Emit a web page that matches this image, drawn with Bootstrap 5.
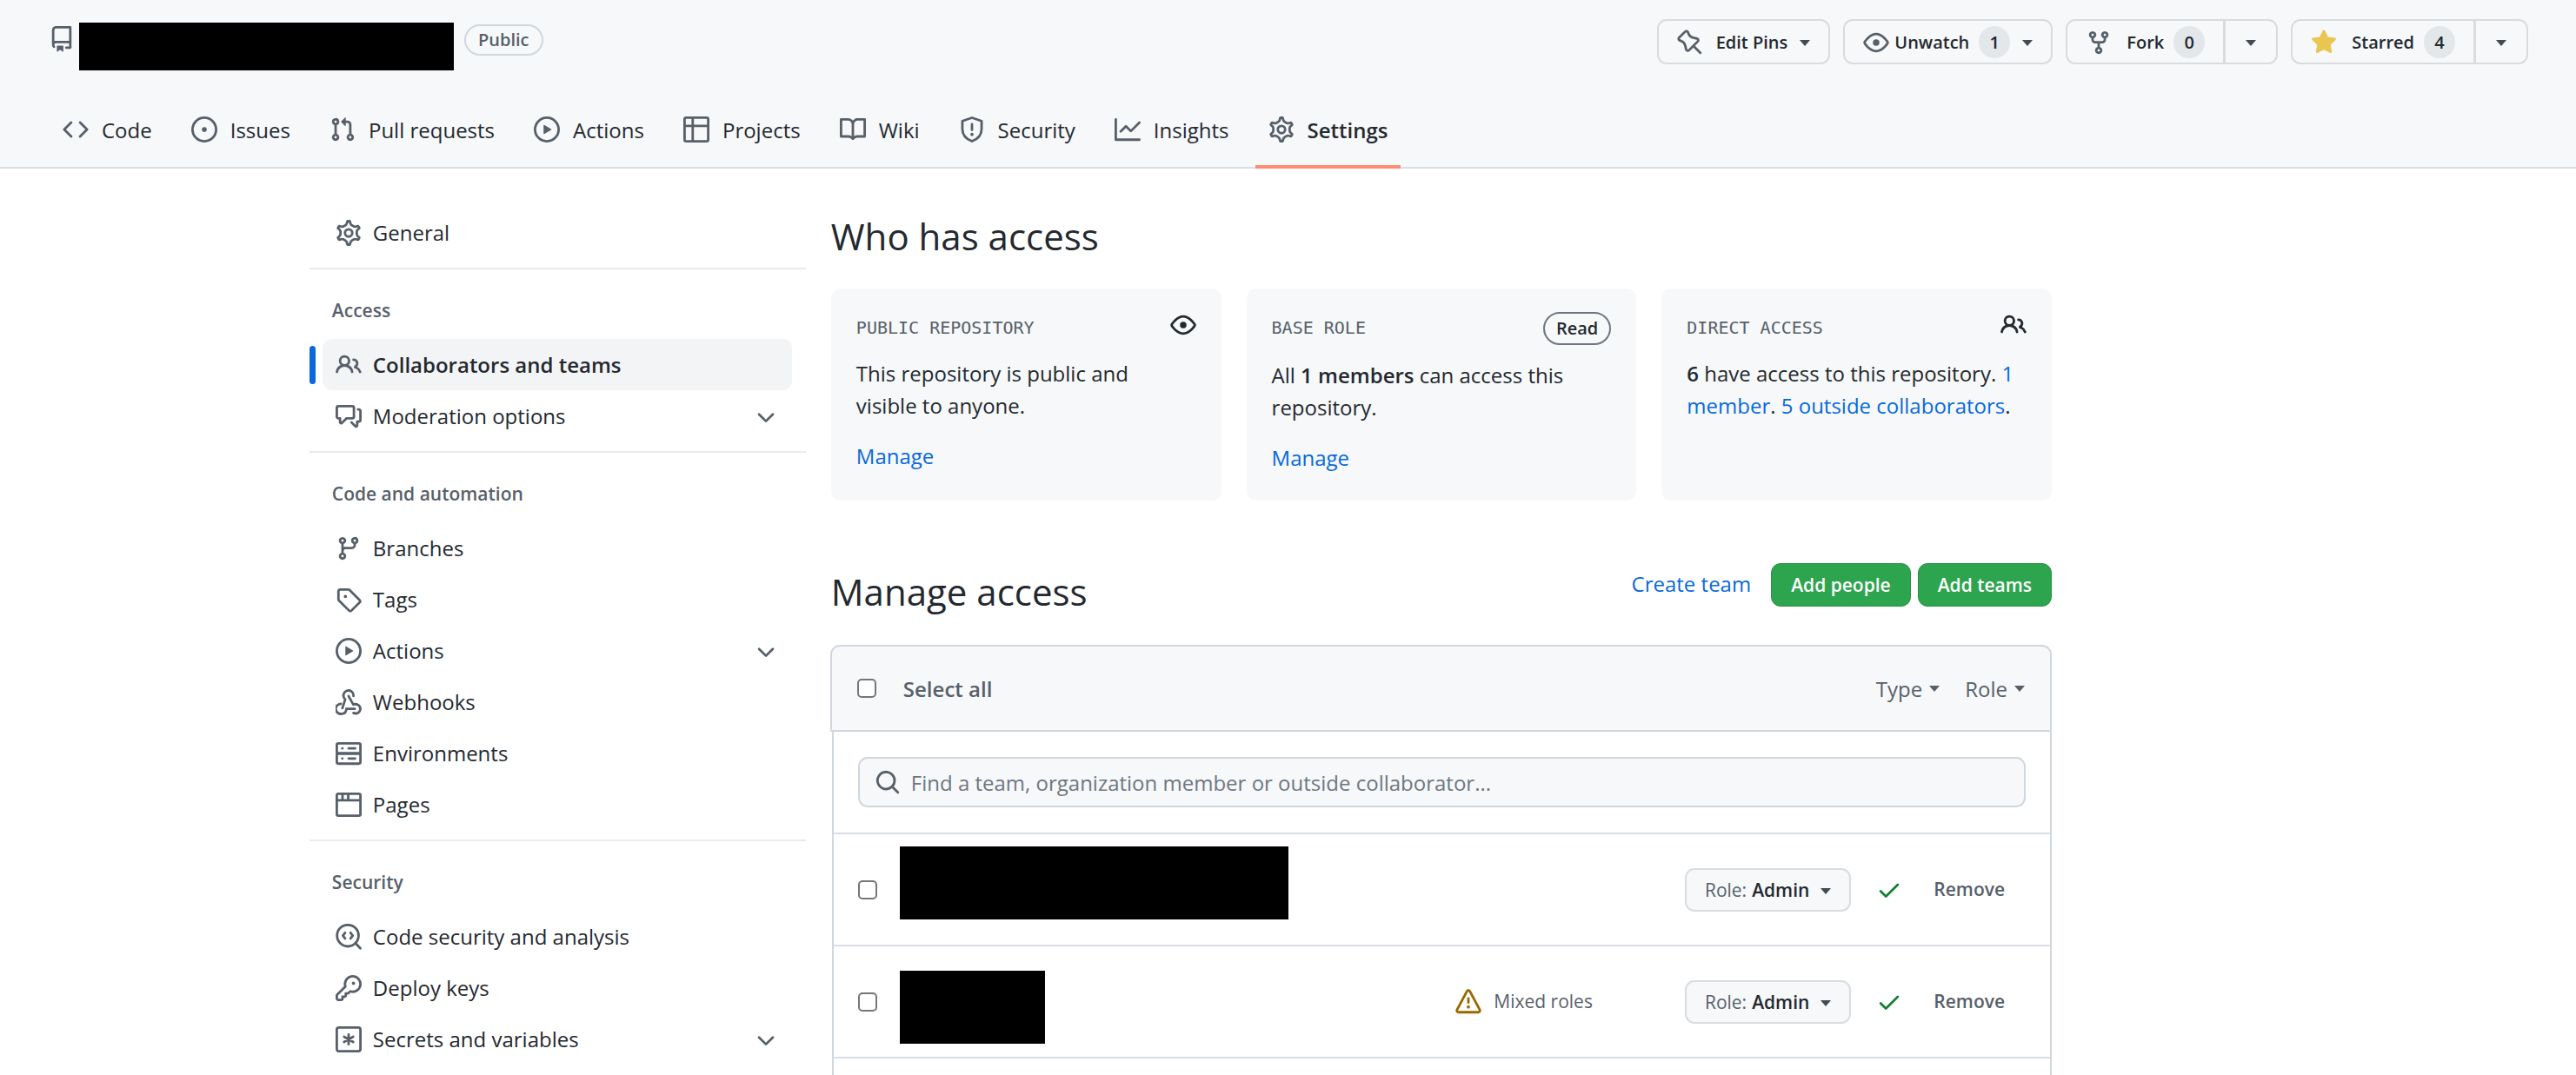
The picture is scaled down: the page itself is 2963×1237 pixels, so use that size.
<!DOCTYPE html>
<html lang="en">
<head>
<meta charset="utf-8">
<meta name="viewport" content="width=device-width, initial-scale=1">
<title>Collaborators and teams</title>
<link href="https://cdn.jsdelivr.net/npm/bootstrap@5.3.0/dist/css/bootstrap.min.css" rel="stylesheet">
<style>
:root{--fg:#24292f;--muted:#57606a;--line:#d0d7de;--soft:#d8dee4;--canvas:#f6f8fa;--blue:#0969da;}
body{font-family:"Open Sans","Noto Sans",sans-serif;font-size:24px;line-height:37px;color:var(--fg);}
a{color:var(--blue);text-decoration:none;}
strong{font-weight:600;}
.oct{width:30px;height:30px;fill:currentColor;fill-rule:evenodd;flex:none;display:block;}
.st{fill:none;stroke:currentColor;stroke-width:1.5;stroke-linecap:round;stroke-linejoin:round;}
.caretdown{width:0;height:0;border:6px solid transparent;border-top:7px solid currentColor;border-bottom:0;flex:none;}
.redact{background:#000;}

.repohead{background:var(--canvas);border-bottom:2px solid var(--soft);height:194px;}
.topline{padding:22px 55px 0 56px;}
.topline .oct{color:var(--muted);}
.topline .starred{color:#eac54f;}
.repobox{width:431px;height:55px;margin:4px 12px 0 5px;}
.pill{border:2px solid var(--line);border-radius:20px;font-size:20px;font-weight:600;line-height:32px;color:var(--muted);padding:0 14px;margin-top:6px;}
.ghbtn{font-size:20px;font-weight:600;line-height:30px;color:var(--fg);background:var(--canvas);border:2px solid #d9dcdf;border-radius:11px;display:flex;align-items:center;padding:1px 21px 0;height:52px;}
.ghbtn:hover{background:#f3f4f6;color:var(--fg);border-color:#d9dcdf;}
.ghbtn .caretdown{color:#424a53;margin-top:2px;}
.countpill{background:#e4e7ea;border-radius:19px;min-width:36px;height:37px;line-height:37px;text-align:center;}
.actionbar{gap:15px;}
.actionbar .t1{padding:0 14px 0 15px;}
.actionbar .t2{padding:0 11px 0 6px;}
.actionbar .t2 ~ .caretdown{margin-left:14px;}
.actionbar .t3{padding:0 11px 0 17px;}
.splitcaret{padding:1px 23px 0;}
.tabs{padding:0 57px;gap:15px;margin-bottom:-2px;}
.tabs a{display:flex;align-items:center;gap:15px;height:90px;padding:0 15px;color:var(--fg);}
.tabs .oct{color:var(--muted);}
.tabs a.active{font-weight:600;border-bottom:4px solid #fd8c73;padding-top:4px;}

.page{padding-left:12.01%;padding-right:20.35%;}
.side{flex:0 0 571px;margin-right:29px;padding-top:44px;}
.side ul{padding-bottom:11px;border-bottom:2px solid #e8ebee;}
.side ul.last{border-bottom:0;}
.side li{margin:0 16px 0 15px;position:relative;}
.side li a{display:flex;align-items:center;height:59px;padding:0 15px;border-radius:11px;color:var(--fg);}
.side li a .lbl{padding-left:13px;flex:1;}
.side .oct{color:var(--muted);}
.side h3{font-size:21px;font-weight:600;line-height:32px;color:var(--muted);margin:0;padding:31px 0 17px 26px;}
.side li.on a{background:#f3f4f6;font-weight:600;}
.side li.on::before{content:"";position:absolute;left:-15px;top:8px;width:7px;height:44px;border-radius:4px;background:var(--blue);}

.mainpane{padding-top:48px;}
h2{font-size:42px;font-weight:400;line-height:60px;margin:0;}
.tiles{gap:29px;margin-top:30px;}
.tile{flex:1 1 0;background:var(--canvas);border-radius:11px;padding:27px 29px;min-height:244px;}
.tile .kicker{font-family:"DejaVu Sans Mono",monospace;font-size:20px;line-height:36px;color:var(--muted);}
.tile p{margin:16px 0 21px;padding-right:8px;}
.rolepill{border:2px solid #6e7781;border-radius:20px;font-size:20px;font-weight:600;line-height:34px;padding:0 13px;}
.managebar{margin-top:72px;height:50px;}
.create{margin-right:15px;padding-bottom:3px;}
.gobtn{background:#2da44e;color:#fff;border:1px solid #2a9147;border-radius:11px;font-size:21px;font-weight:600;line-height:48px;padding:0 22px;}
.gobtn:hover{background:#2c974b;color:#fff;}
.accessbox{margin-top:44px;}
.accessbody{border-left:2px solid var(--line);border-right:2px solid var(--line);margin-left:1px;}
.selhead{background:var(--canvas);border:2px solid var(--line);border-radius:11px 11px 0 0;height:100px;margin-left:-1px;padding:0 29px;color:var(--muted);}
.selhead button{background:none;border:0;padding:0;color:var(--muted);display:flex;align-items:center;gap:8px;}
.selall{font-weight:600;padding-left:31px;}
.filters{gap:29px;}
.form-check-input.tick{width:22px;height:22px;margin:0;border:2px solid #767676;border-radius:5px;flex:none;}
.findrow{padding:29px 28px;border-bottom:2px solid var(--soft);}
.findbox{background:var(--canvas);border:2px solid var(--line);border-radius:11px;height:58px;padding:0 17px;color:var(--muted);}
.findbox input{background:none;border:0;padding:0 0 0 12px;font-size:24px;color:var(--fg);outline:0;flex:1;}
.findbox input::placeholder{color:#6e7781;opacity:1;}
.person{height:129px;border-bottom:2px solid var(--soft);padding:0 52px 0 28px;}
.person .redact{height:84px;margin-left:26px;}
.who1{width:447px;margin-bottom:16px;}
.who2{width:167px;margin-top:12px;}
.mixed{font-size:21px;color:var(--muted);gap:14px;margin-right:106px;}
.rolebtn{font-size:21px;height:50px;gap:13px;margin-right:29px;}
.rl{color:var(--muted);margin-right:-7px;}
.rmbtn{background:none;border:0;padding:0;font-size:21px;font-weight:600;color:var(--muted);}
.amber{color:#9a6700;}
.okgreen{color:#1a7f37;margin-right:36px;}
</style>
</head>
<body>
<svg class="d-none" xmlns="http://www.w3.org/2000/svg">
<symbol id="repo" viewBox="0 0 16 16"><path d="M2 2.5A2.5 2.5 0 014.5 0h8.75a.75.75 0 01.75.75v12.5a.75.75 0 01-.75.75h-2.5a.75.75 0 110-1.5h1.75v-2h-8a1 1 0 00-.714 1.7.75.75 0 01-1.072 1.05A2.495 2.495 0 012 11.5v-9zm10.5-1V9h-8c-.356 0-.694.074-1 .208V2.5a1 1 0 011-1h8zM5 12.25v3.25a.25.25 0 00.4.2l1.45-1.087a.25.25 0 01.3 0L8.6 15.7a.25.25 0 00.4-.2v-3.25a.25.25 0 00-.25-.25h-3.5a.25.25 0 00-.25.25z"/></symbol>
<symbol id="code" viewBox="0 0 16 16"><path d="M4.72 3.22a.75.75 0 011.06 1.06L2.06 8l3.72 3.72a.75.75 0 11-1.06 1.06L.47 8.53a.75.75 0 010-1.06l4.25-4.25zm6.56 0a.75.75 0 10-1.06 1.06L13.94 8l-3.72 3.72a.75.75 0 101.06 1.06l4.25-4.25a.75.75 0 000-1.06l-4.25-4.25z"/></symbol>
<symbol id="issue" viewBox="0 0 16 16"><path d="M8 9.5a1.5 1.5 0 100-3 1.5 1.5 0 000 3z"/><path d="M8 0a8 8 0 100 16A8 8 0 008 0zM1.5 8a6.5 6.5 0 1113 0 6.5 6.5 0 01-13 0z"/></symbol>
<symbol id="pull" viewBox="0 0 16 16"><path d="M7.177 3.073L9.573.677A.25.25 0 0110 .854v4.792a.25.25 0 01-.427.177L7.177 3.427a.25.25 0 010-.354zM3.75 2.5a.75.75 0 100 1.5.75.75 0 000-1.5zm-2.25.75a2.25 2.25 0 113 2.122v5.256a2.251 2.251 0 11-1.5 0V5.372A2.25 2.25 0 011.5 3.25zM11 2.5h-1V4h1a1 1 0 011 1v5.628a2.251 2.251 0 101.5 0V5A2.5 2.5 0 0011 2.5zm1 10.25a.75.75 0 111.5 0 .75.75 0 01-1.5 0zM3.75 12a.75.75 0 100 1.5.75.75 0 000-1.5z"/></symbol>
<symbol id="play" viewBox="0 0 16 16"><path d="M1.5 8a6.5 6.5 0 1113 0 6.5 6.5 0 01-13 0zM8 0a8 8 0 100 16A8 8 0 008 0zM6.379 5.227A.25.25 0 006 5.442v5.117a.25.25 0 00.379.214l4.264-2.559a.25.25 0 000-.428L6.379 5.227z"/></symbol>
<symbol id="grid" viewBox="0 0 16 16"><g class="st"><rect x=".75" y=".75" width="14.5" height="14.5" rx="1"/><path d="M.75 5.75h14.5M5.75.75v14.5"/></g></symbol>
<symbol id="book" viewBox="0 0 16 16"><path d="M0 1.75A.75.75 0 01.75 1h4.253c1.227 0 2.317.59 3 1.501A3.744 3.744 0 0111.006 1h4.245a.75.75 0 01.75.75v10.5a.75.75 0 01-.75.75h-4.507a2.25 2.25 0 00-1.591.659l-.622.621a.75.75 0 01-1.06 0l-.622-.621A2.25 2.25 0 005.258 13H.75a.75.75 0 01-.75-.75V1.75zm8.755 3a2.25 2.25 0 012.25-2.25H14.5v9h-3.757c-.71 0-1.4.201-1.992.572l.004-7.322zm-1.504 7.324l.004-5.073-.002-2.253A2.25 2.25 0 005.003 2.5H1.5v9h3.757a3.75 3.75 0 011.994.574z"/></symbol>
<symbol id="shield" viewBox="0 0 16 16"><g class="st"><path d="M8 .8l5.9 2v4.9c0 3.7-2.3 6.1-5.9 7.5-3.6-1.4-5.9-3.8-5.9-7.5V2.8z"/><path d="M8 4.8v3.4"/></g><circle cx="8" cy="11" r="1"/></symbol>
<symbol id="graph" viewBox="0 0 16 16"><path d="M1.5 1.75a.75.75 0 00-1.5 0v12.5c0 .414.336.75.75.75h14.5a.75.75 0 000-1.5H1.5V1.75zm14.28 2.53a.75.75 0 00-1.06-1.06L10 7.94 7.53 5.47a.75.75 0 00-1.06 0L3.22 8.72a.75.75 0 001.06 1.06L7 7.06l2.47 2.47a.75.75 0 001.06 0l5.25-5.25z"/></symbol>
<symbol id="gear" viewBox="0 0 16 16"><g class="st"><path stroke-width="1.35" transform="translate(8 8) scale(1.11) translate(-8 -8)" d="M7.429 1.525a6.593 6.593 0 011.142 0c.036.003.108.036.137.146l.289 1.105c.147.56.55.967.997 1.189.174.086.341.183.501.29.417.278.97.423 1.53.27l1.102-.303c.11-.03.175.016.195.046.219.31.41.641.573.989.014.031.022.11-.059.19l-.815.806c-.411.406-.562.957-.53 1.456a4.588 4.588 0 010 .582c-.032.499.119 1.05.53 1.456l.815.806c.08.08.073.159.059.19a6.494 6.494 0 01-.573.99c-.02.029-.086.074-.195.045l-1.103-.303c-.559-.153-1.112-.008-1.529.27-.16.107-.327.204-.5.29-.449.222-.851.628-.998 1.189l-.289 1.105c-.029.11-.101.143-.137.146a6.613 6.613 0 01-1.142 0c-.036-.003-.108-.037-.137-.146l-.289-1.105c-.147-.56-.55-.967-.997-1.189a4.502 4.502 0 01-.501-.29c-.417-.278-.97-.423-1.53-.27l-1.102.303c-.11.03-.175-.016-.195-.046a6.492 6.492 0 01-.573-.989c-.014-.031-.022-.11.059-.19l.815-.806c.411-.406.562-.957.53-1.456a4.587 4.587 0 010-.582c.032-.499-.119-1.05-.53-1.456l-.815-.806c-.08-.08-.073-.159-.059-.19a6.44 6.44 0 01.573-.99c.02-.029.086-.075.195-.045l1.103.303c.559.153 1.112.008 1.529-.27.16-.107.327-.204.5-.29.449-.222.851-.628.998-1.189l.289-1.105c.029-.11.101-.143.137-.146z"/><circle cx="8" cy="8" r="2.25"/></g></symbol>
<symbol id="pin" viewBox="0 0 16 16"><path d="M4.456.734a1.75 1.75 0 012.826.504l.613 1.327a3.081 3.081 0 002.084 1.707l2.454.584c1.332.317 1.8 1.972.832 2.94L11.06 10l3.72 3.72a.75.75 0 11-1.061 1.06L10 11.06l-2.204 2.205c-.968.968-2.623.5-2.94-.832l-.584-2.454a3.081 3.081 0 00-1.707-2.084l-1.327-.613a1.75 1.75 0 01-.504-2.826L4.456.734zM5.92 1.866a.25.25 0 00-.404-.072L1.794 5.516a.25.25 0 00.072.404l1.328.613A4.582 4.582 0 015.73 9.63l.584 2.454a.25.25 0 00.42.12l5.47-5.47a.25.25 0 00-.12-.42L9.63 5.73a4.581 4.581 0 01-3.098-2.537L5.92 1.866z"/></symbol>
<symbol id="eye" viewBox="0 0 16 16"><path d="M1.679 7.932c.412-.621 1.242-1.75 2.366-2.717C5.175 4.242 6.527 3.5 8 3.5c1.473 0 2.824.742 3.955 1.715 1.124.967 1.954 2.096 2.366 2.717a.119.119 0 010 .136c-.412.621-1.242 1.75-2.366 2.717C10.825 11.758 9.473 12.5 8 12.5c-1.473 0-2.824-.742-3.955-1.715C2.92 9.818 2.09 8.69 1.679 8.068a.119.119 0 010-.136zM8 2c-1.981 0-3.67.992-4.933 2.078C1.797 5.169.88 6.423.43 7.1a1.619 1.619 0 000 1.798c.45.678 1.367 1.932 2.637 3.024C4.329 13.008 6.019 14 8 14c1.981 0 3.67-.992 4.933-2.078 1.27-1.091 2.187-2.345 2.637-3.023a1.619 1.619 0 000-1.798c-.45-.678-1.367-1.932-2.637-3.023C11.671 2.992 9.981 2 8 2zm0 8a2 2 0 100-4 2 2 0 000 4z"/></symbol>
<symbol id="fork" viewBox="0 0 16 16"><path d="M5 3.25a.75.75 0 11-1.5 0 .75.75 0 011.5 0zm0 2.122a2.25 2.25 0 10-1.5 0v.878A2.25 2.25 0 005.75 8.5h1.5v2.128a2.251 2.251 0 101.5 0V8.5h1.5a2.25 2.25 0 002.25-2.25v-.878a2.25 2.25 0 10-1.5 0v.878a.75.75 0 01-.75.75h-4.5A.75.75 0 015 6.25v-.878zm3.75 7.378a.75.75 0 11-1.5 0 .75.75 0 011.5 0zm3-8.75a.75.75 0 100-1.5.75.75 0 000 1.5z"/></symbol>
<symbol id="star" viewBox="0 0 16 16"><path d="M8 .25a.75.75 0 01.673.418l1.882 3.815 4.21.612a.75.75 0 01.416 1.279l-3.046 2.97.719 4.192a.75.75 0 01-1.088.791L8 12.347l-3.766 1.98a.75.75 0 01-1.088-.79l.72-4.194L.818 6.374a.75.75 0 01.416-1.28l4.21-.611L7.327.668A.75.75 0 018 .25z"/></symbol>
<symbol id="people" viewBox="0 0 16 16"><path d="M5.5 3.5a2 2 0 100 4 2 2 0 000-4zM2 5.5a3.5 3.5 0 115.898 2.549 5.507 5.507 0 013.034 4.084.75.75 0 11-1.482.235 4.001 4.001 0 00-7.9 0 .75.75 0 01-1.482-.236A5.507 5.507 0 013.102 8.05 3.49 3.49 0 012 5.5zM11 4a.75.75 0 100 1.5 1.5 1.5 0 01.666 2.844.75.75 0 00-.416.672v.352a.75.75 0 00.574.73c1.2.289 2.162 1.2 2.522 2.372a.75.75 0 101.434-.44 5.01 5.01 0 00-2.56-3.012A3 3 0 0011 4z"/></symbol>
<symbol id="talk" viewBox="0 0 16 16"><path d="M1.5 2.75a.25.25 0 01.25-.25h8.5a.25.25 0 01.25.25v5.5a.25.25 0 01-.25.25h-3.5a.75.75 0 00-.53.22L3.5 11.44V9.25a.75.75 0 00-.75-.75h-1a.25.25 0 01-.25-.25v-5.5zM1.75 1A1.75 1.75 0 000 2.75v5.5C0 9.216.784 10 1.75 10H2v1.543a1.457 1.457 0 002.487 1.03L7.061 10h3.189A1.75 1.75 0 0012 8.25v-5.5A1.75 1.75 0 0010.25 1h-8.5zM14.5 4.75a.25.25 0 00-.25-.25h-.5a.75.75 0 110-1.5h.5c.966 0 1.75.784 1.75 1.75v5.5A1.75 1.75 0 0114.25 12H14v1.543a1.457 1.457 0 01-2.487 1.03L9.22 12.28a.75.75 0 111.06-1.06l2.22 2.22v-2.19a.75.75 0 01.75-.75h1a.25.25 0 00.25-.25v-5.5z"/></symbol>
<symbol id="branch" viewBox="0 0 16 16"><path d="M11.75 2.5a.75.75 0 100 1.5.75.75 0 000-1.5zm-2.25.75a2.25 2.25 0 113 2.122V6A2.5 2.5 0 0110 8.5H6a1 1 0 00-1 1v1.128a2.251 2.251 0 11-1.5 0V5.372a2.25 2.25 0 111.5 0v1.836A2.492 2.492 0 016 7h4a1 1 0 001-1v-.628A2.25 2.25 0 019.5 3.25zM4.25 12a.75.75 0 100 1.5.75.75 0 000-1.5zM3.5 3.25a.75.75 0 111.5 0 .75.75 0 01-1.5 0z"/></symbol>
<symbol id="tag" viewBox="0 0 16 16"><path d="M2.5 7.775V2.75a.25.25 0 01.25-.25h5.025a.25.25 0 01.177.073l6.25 6.25a.25.25 0 010 .354l-5.025 5.025a.25.25 0 01-.354 0l-6.25-6.25a.25.25 0 01-.073-.177zm-1.5 0V2.75C1 1.784 1.784 1 2.75 1h5.025c.464 0 .91.184 1.238.513l6.25 6.25a1.75 1.75 0 010 2.474l-5.026 5.026a1.75 1.75 0 01-2.474 0l-6.25-6.25A1.75 1.75 0 011 7.775zM6 5a1 1 0 100 2 1 1 0 000-2z"/></symbol>
<symbol id="hook" viewBox="0 0 16 16"><g class="st"><path d="M11 4.2A3.1 3.1 0 105.9 6.3L4.2 11.6M8 4.3l2.9 5.2c2-.9 4.3.5 4.3 2.6a2.9 2.9 0 01-4.2 2.5M3.2 9A3.1 3.1 0 104 15.1c1.9-.3 2.6-1.8 2.6-3h5.2"/></g></symbol>
<symbol id="server" viewBox="0 0 16 16"><g class="st"><rect x=".75" y="1.75" width="14.5" height="6.25" rx="1"/><rect x=".75" y="8" width="14.5" height="6.25" rx="1"/><path d="M8 4.9h4M8 11.1h4M4.1 4.9h.1M4.1 11.1h.1"/></g></symbol>
<symbol id="browser" viewBox="0 0 16 16"><g class="st"><rect x=".75" y="1.25" width="14.5" height="13.5" rx="1"/><path d="M.75 5.25h14.5M4.25 1.5v3.5M7.75 1.5v3.5"/></g></symbol>
<symbol id="scan" viewBox="0 0 16 16"><g class="st"><circle cx="7.5" cy="7.25" r="6.6"/><path d="M12.3 12l2.9 3.1M5.8 5.5L4.5 7.25 5.8 9M9.2 5.5l1.3 1.75L9.2 9"/></g></symbol>
<symbol id="key" viewBox="0 0 16 16"><path d="M6.5 5.5a4 4 0 112.731 3.795.75.75 0 00-.768.18L7.44 10.5H6.25a.75.75 0 00-.75.75v1.19l-.06.06H4.25a.75.75 0 00-.75.75v1.19l-.06.06H1.75a.25.25 0 01-.25-.25v-1.69l5.024-5.023a.75.75 0 00.181-.768A3.995 3.995 0 016.5 5.5zm4-5.5a5.5 5.5 0 00-5.348 6.788L.22 11.72a.75.75 0 00-.22.53v2C0 15.216.784 16 1.75 16h2a.75.75 0 00.53-.22l.5-.5a.75.75 0 00.22-.53V14h.75a.75.75 0 00.53-.22l.5-.5a.75.75 0 00.22-.53V12h.75a.75.75 0 00.53-.22l.932-.932A5.5 5.5 0 1010.5 0zm.5 6a1 1 0 100-2 1 1 0 000 2z"/></symbol>
<symbol id="secret" viewBox="0 0 16 16"><g class="st"><rect x=".75" y=".75" width="14.5" height="14.5" rx="1.2"/><path d="M8 5v6M5.2 6.4l5.6 3.2M10.8 6.4L5.2 9.6"/></g></symbol>
<symbol id="find" viewBox="0 0 16 16"><path d="M11.5 7a4.499 4.499 0 11-8.998 0A4.499 4.499 0 0111.5 7zm-.82 4.74a6 6 0 111.06-1.06l3.04 3.04a.75.75 0 11-1.06 1.06l-3.04-3.04z"/></symbol>
<symbol id="check" viewBox="0 0 16 16"><path d="M13.78 4.22a.75.75 0 010 1.06l-7.25 7.25a.75.75 0 01-1.06 0L2.22 9.28a.75.75 0 011.06-1.06L6 10.94l6.72-6.72a.75.75 0 011.06 0z"/></symbol>
<symbol id="alert" viewBox="0 0 16 16"><path d="M8.22 1.754a.25.25 0 00-.44 0L1.698 13.132a.25.25 0 00.22.368h12.164a.25.25 0 00.22-.368L8.22 1.754zm-1.763-.707c.659-1.234 2.427-1.234 3.086 0l6.082 11.378A1.75 1.75 0 0114.082 15H1.918a1.75 1.75 0 01-1.543-2.575L6.457 1.047zM9 11a1 1 0 11-2 0 1 1 0 012 0zm-.25-5.25a.75.75 0 00-1.5 0v2.5a.75.75 0 001.5 0v-2.5z"/></symbol>
<symbol id="chev" viewBox="0 0 16 16"><path d="M12.78 6.22a.75.75 0 010 1.06l-4.25 4.25a.75.75 0 01-1.06 0L3.22 7.28a.75.75 0 011.06-1.06L8 9.94l3.72-3.72a.75.75 0 011.06 0z"/></symbol>
</svg>

<div class="vh-100 d-flex flex-column overflow-hidden">
<header class="repohead d-flex flex-column justify-content-between flex-shrink-0">
  <div class="topline d-flex justify-content-between align-items-start">
    <div class="d-flex align-items-start">
      <svg class="oct mt-2"><use href="#repo"/></svg>
      <div class="redact repobox"></div>
      <span class="pill">Public</span>
    </div>
    <div class="d-flex actionbar">
      <button type="button" class="btn ghbtn"><svg class="oct"><use href="#pin"/></svg><span class="t1">Edit Pins</span><span class="caretdown"></span></button>
      <button type="button" class="btn ghbtn"><svg class="oct"><use href="#eye"/></svg><span class="t2">Unwatch</span><span class="countpill">1</span><span class="caretdown"></span></button>
      <div class="btn-group">
        <button type="button" class="btn ghbtn"><svg class="oct"><use href="#fork"/></svg><span class="t3">Fork</span><span class="countpill">0</span></button>
        <button type="button" class="btn ghbtn splitcaret" aria-label="Fork options"><span class="caretdown"></span></button>
      </div>
      <div class="btn-group">
        <button type="button" class="btn ghbtn"><svg class="oct starred"><use href="#star"/></svg><span class="t3">Starred</span><span class="countpill">4</span></button>
        <button type="button" class="btn ghbtn splitcaret" aria-label="Star lists"><span class="caretdown"></span></button>
      </div>
    </div>
  </div>
  <nav class="tabs d-flex" aria-label="Repository">
    <a href="#"><svg class="oct"><use href="#code"/></svg>Code</a>
    <a href="#"><svg class="oct"><use href="#issue"/></svg>Issues</a>
    <a href="#"><svg class="oct"><use href="#pull"/></svg>Pull requests</a>
    <a href="#"><svg class="oct"><use href="#play"/></svg>Actions</a>
    <a href="#"><svg class="oct"><use href="#grid"/></svg>Projects</a>
    <a href="#"><svg class="oct"><use href="#book"/></svg>Wiki</a>
    <a href="#"><svg class="oct"><use href="#shield"/></svg>Security</a>
    <a href="#"><svg class="oct"><use href="#graph"/></svg>Insights</a>
    <a href="#" class="active" aria-current="page"><svg class="oct"><use href="#gear"/></svg>Settings</a>
  </nav>
</header>

<div class="page d-flex flex-grow-1">
  <nav class="side" aria-label="Settings">
    <ul class="list-unstyled m-0">
      <li><a href="#"><svg class="oct"><use href="#gear"/></svg><span class="lbl">General</span></a></li>
    </ul>
    <h3>Access</h3>
    <ul class="list-unstyled m-0">
      <li class="on"><a href="#" aria-current="page"><svg class="oct"><use href="#people"/></svg><span class="lbl">Collaborators and teams</span></a></li>
      <li><a href="#"><svg class="oct"><use href="#talk"/></svg><span class="lbl">Moderation options</span><svg class="oct"><use href="#chev"/></svg></a></li>
    </ul>
    <h3>Code and automation</h3>
    <ul class="list-unstyled m-0">
      <li><a href="#"><svg class="oct"><use href="#branch"/></svg><span class="lbl">Branches</span></a></li>
      <li><a href="#"><svg class="oct"><use href="#tag"/></svg><span class="lbl">Tags</span></a></li>
      <li><a href="#"><svg class="oct"><use href="#play"/></svg><span class="lbl">Actions</span><svg class="oct"><use href="#chev"/></svg></a></li>
      <li><a href="#"><svg class="oct"><use href="#hook"/></svg><span class="lbl">Webhooks</span></a></li>
      <li><a href="#"><svg class="oct"><use href="#server"/></svg><span class="lbl">Environments</span></a></li>
      <li><a href="#"><svg class="oct"><use href="#browser"/></svg><span class="lbl">Pages</span></a></li>
    </ul>
    <h3>Security</h3>
    <ul class="list-unstyled m-0 last">
      <li><a href="#"><svg class="oct"><use href="#scan"/></svg><span class="lbl">Code security and analysis</span></a></li>
      <li><a href="#"><svg class="oct"><use href="#key"/></svg><span class="lbl">Deploy keys</span></a></li>
      <li><a href="#"><svg class="oct"><use href="#secret"/></svg><span class="lbl">Secrets and variables</span><svg class="oct"><use href="#chev"/></svg></a></li>
    </ul>
  </nav>

  <main class="mainpane flex-grow-1 d-flex flex-column">
    <h2>Who has access</h2>
    <div class="tiles d-flex">
      <section class="tile">
        <div class="d-flex justify-content-between align-items-start"><span class="kicker">PUBLIC REPOSITORY</span><svg class="oct"><use href="#eye"/></svg></div>
        <p>This repository is public and visible to anyone.</p>
        <a href="#">Manage</a>
      </section>
      <section class="tile">
        <div class="d-flex justify-content-between align-items-start"><span class="kicker">BASE ROLE</span><span class="rolepill">Read</span></div>
        <p>All <strong>1 members</strong> can access this repository.</p>
        <a href="#">Manage</a>
      </section>
      <section class="tile">
        <div class="d-flex justify-content-between align-items-start"><span class="kicker">DIRECT ACCESS</span><svg class="oct"><use href="#people"/></svg></div>
        <p><strong>6</strong> have access to this repository. <a href="#">1 member</a>. <a href="#">5 outside collaborators</a>.</p>
      </section>
    </div>

    <div class="managebar d-flex justify-content-between align-items-center">
      <h2 class="pt-3">Manage access</h2>
      <div class="d-flex align-items-center gap-2">
        <a href="#" class="create">Create team</a>
        <button type="button" class="btn gobtn">Add people</button>
        <button type="button" class="btn gobtn">Add teams</button>
      </div>
    </div>

    <div class="accessbox flex-grow-1 d-flex flex-column">
      <div class="selhead d-flex align-items-center justify-content-between flex-shrink-0">
        <div class="d-flex align-items-center"><input class="form-check-input tick" type="checkbox" id="all"><label for="all" class="selall">Select all</label></div>
        <div class="d-flex filters"><button type="button">Type<span class="caretdown"></span></button><button type="button">Role<span class="caretdown"></span></button></div>
      </div>
      <div class="accessbody flex-grow-1">
        <div class="findrow">
          <div class="findbox d-flex align-items-center"><svg class="oct"><use href="#find"/></svg><input type="text" aria-label="Find a team, organization member or outside collaborator" placeholder="Find a team, organization member or outside collaborator..."></div>
        </div>
        <div class="person d-flex align-items-center">
          <input class="form-check-input tick" type="checkbox" aria-label="Select person">
          <div class="redact who1"></div>
          <div class="d-flex align-items-center ms-auto">
            <button type="button" class="btn ghbtn rolebtn"><span class="fw-normal rl">Role:</span>Admin<span class="caretdown"></span></button>
            <svg class="oct okgreen"><use href="#check"/></svg>
            <button type="button" class="rmbtn">Remove</button>
          </div>
        </div>
        <div class="person d-flex align-items-center">
          <input class="form-check-input tick" type="checkbox" aria-label="Select person">
          <div class="redact who2"></div>
          <div class="d-flex align-items-center ms-auto">
            <span class="mixed d-flex align-items-center"><svg class="oct amber"><use href="#alert"/></svg>Mixed roles</span>
            <button type="button" class="btn ghbtn rolebtn"><span class="fw-normal rl">Role:</span>Admin<span class="caretdown"></span></button>
            <svg class="oct okgreen"><use href="#check"/></svg>
            <button type="button" class="rmbtn">Remove</button>
          </div>
        </div>
      </div>
    </div>
  </main>
</div>
</div>
<script src="https://cdn.jsdelivr.net/npm/bootstrap@5.3.0/dist/js/bootstrap.bundle.min.js"></script>
</body>
</html>
